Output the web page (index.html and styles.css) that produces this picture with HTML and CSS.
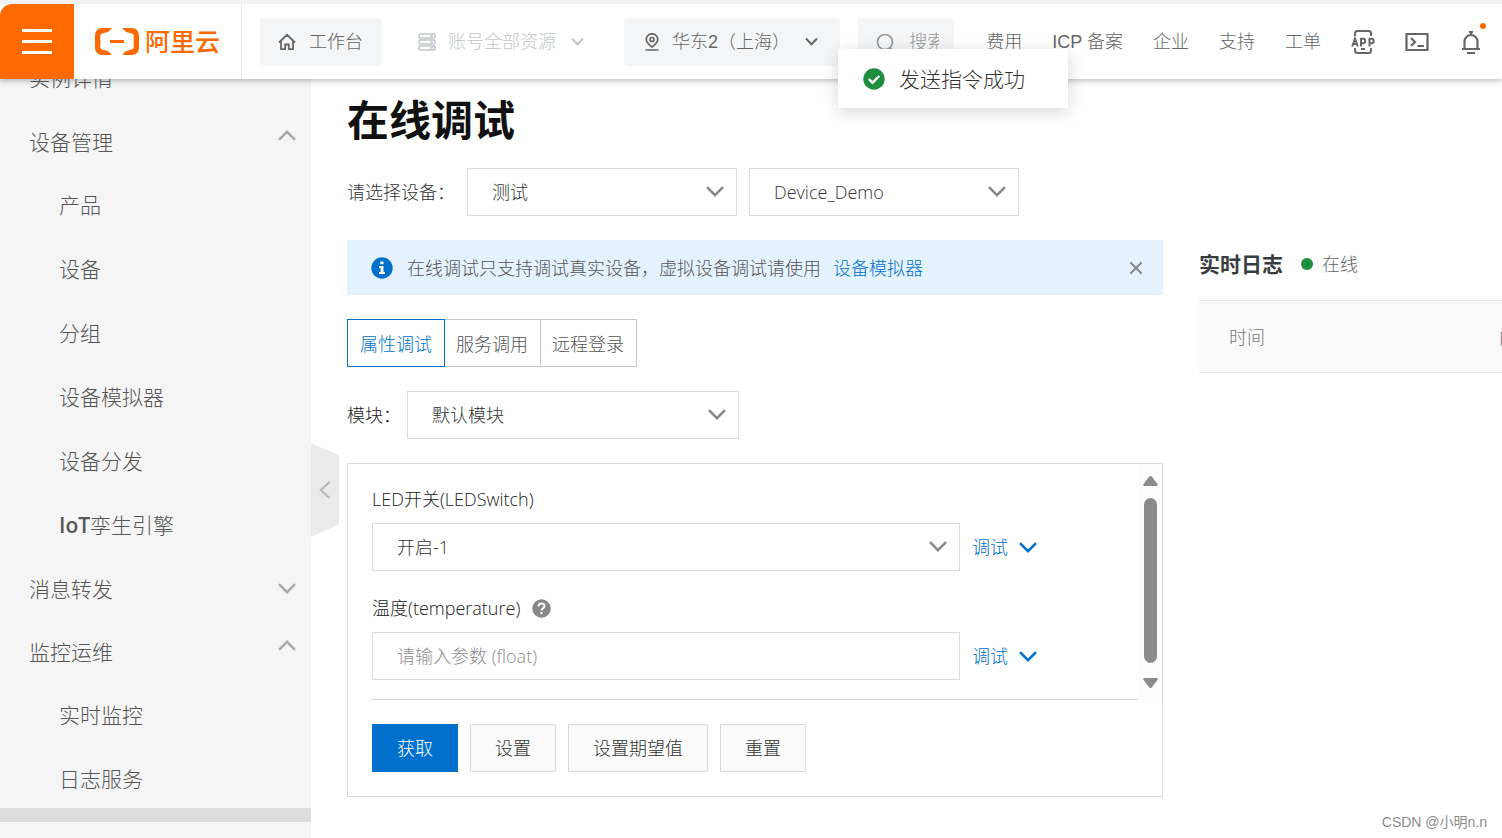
FILE: index.html
```html
<!DOCTYPE html>
<html lang="zh-CN">
<head>
<meta charset="utf-8">
<title>在线调试</title>
<link rel="stylesheet" href="styles.css">
</head>
<body>
<svg class="defs" aria-hidden="true">
  <symbol id="chevron" viewBox="0 0 18 11"><path d="M1 1.200l8 8 8-8" fill="none" stroke="currentColor" stroke-width="2.500"/></symbol>
</svg>

<header class="topbar">
  <button class="menu" aria-label="菜单"><span></span><span></span><span></span></button>
  <a class="logo" href="#">
    <svg width="44" height="27" viewBox="0 0 44 27" aria-hidden="true">
      <path d="M17 0H7a7 7 0 0 0-7 7v13a7 7 0 0 0 7 7h10l-4-4-6-1.600A2.400 2.400 0 0 1 5.300 19V8A2.400 2.400 0 0 1 7 5.600L13 4z" fill="#ff6a00"/>
      <path d="M27 0h10a7 7 0 0 1 7 7v13a7 7 0 0 1-7 7H27l4-4 6-1.600A2.400 2.400 0 0 0 38.700 19V8A2.400 2.400 0 0 0 37 5.600L31 4z" fill="#ff6a00"/>
      <path d="M15 12h14v3H15z" fill="#ff6a00"/>
    </svg>
    <span>阿里云</span>
  </a>
  <button class="chip home">
    <svg width="18" height="18" viewBox="0 0 18 18" fill="none" stroke="currentColor" stroke-width="1.800" aria-hidden="true"><path d="M1 9.500L9 1.800l8 7.700M3 8v8.200h4.200v-4.700h3.600v4.700H15V8"/></svg>
    <span>工作台</span>
  </button>
  <button class="chip account" disabled>
    <svg width="18" height="18" viewBox="0 0 18 18" fill="none" stroke="currentColor" stroke-width="1.600" aria-hidden="true"><rect x="1" y="1" width="16" height="4" rx="1"/><rect x="1" y="7" width="16" height="4" rx="1"/><rect x="1" y="13" width="16" height="4" rx="1"/><path d="M12 3h3M12 9h3M12 15h3"/></svg>
    <span>账号全部资源</span>
    <svg class="small-chevron" viewBox="0 0 13 9" fill="none" stroke="currentColor" stroke-width="2" aria-hidden="true"><path d="M1 1.500l5.500 5.700L12 1.500"/></svg>
  </button>
  <button class="chip region">
    <svg width="16" height="18" viewBox="0 0 16 18" fill="none" stroke="currentColor" stroke-width="1.700" aria-hidden="true"><path d="M8 14C4 11 2.300 9 2.300 6.500a5.700 5.700 0 0 1 11.400 0C13.700 9 12 11 8 14zM1.500 17h13"/><circle cx="8" cy="6.500" r="2"/></svg>
    <span>华东2（上海）</span>
    <svg class="small-chevron" viewBox="0 0 13 9" fill="none" stroke="currentColor" stroke-width="2" aria-hidden="true"><path d="M1 1.500l5.500 5.700L12 1.500"/></svg>
  </button>
  <div class="spacer"></div>
  <label class="search">
    <svg width="18" height="18" viewBox="0 0 18 18" fill="none" stroke="currentColor" stroke-width="1.700" aria-hidden="true"><circle cx="9" cy="9" r="7.500"/><path d="M13.500 14.500l3 3"/></svg>
    <input type="text" placeholder="搜索" aria-label="搜索">
  </label>
  <nav class="toplinks">
    <a href="#">费用</a>
    <a href="#">ICP 备案</a>
    <a href="#">企业</a>
    <a href="#">支持</a>
    <a href="#">工单</a>
    <a href="#" aria-label="APP">
      <svg width="24" height="24" viewBox="0 0 24 24" fill="none" stroke="currentColor" stroke-width="2" aria-hidden="true"><path d="M4 6V3.500Q4 1 6.500 1h11Q20 1 20 3.500V6M4 18v2.500Q4 23 6.500 23h11q2.500 0 2.500-2.500V18M10 19h4"/><path stroke-width="2" d="M1.200 16.500L4 8.500l2.800 8M2.200 14h3.600M10 16.500V8.800h2a2.200 2.200 0 0 1 0 4.400h-2M18.500 16.500V8.800h2a2.200 2.200 0 0 1 0 4.400h-2"/></svg>
    </a>
    <a href="#" aria-label="命令行">
      <svg width="24" height="24" viewBox="0 0 24 24" fill="none" stroke="currentColor" stroke-width="2.200" aria-hidden="true"><path d="M1.500 4h21v16h-21zM6 8l4 4-4 4M12.500 16H19"/></svg>
    </a>
    <a class="bell" href="#" aria-label="通知">
      <svg width="24" height="24" viewBox="0 0 24 24" fill="none" stroke="currentColor" stroke-width="2.200" aria-hidden="true"><path d="M3 19h18M5.500 19v-7.500a6.500 6.500 0 0 1 13 0V19M8 23h8M10 2h4M12 2v3"/></svg>
      <i></i>
    </a>
  </nav>
</header>

<div class="layout">
  <aside class="sidebar">
    <nav class="side-scroll">
      <ul class="side-list">
        <li><a class="side-head" href="#">实例详情</a></li>
        <li>
          <button class="side-head group">设备管理<svg class="chevron up"><use href="#chevron"/></svg></button>
          <ul class="side-sub">
            <li><a href="#">产品</a></li>
            <li><a href="#">设备</a></li>
            <li><a href="#">分组</a></li>
            <li><a href="#">设备模拟器</a></li>
            <li><a href="#">设备分发</a></li>
            <li><a href="#"><span class="latin">IoT</span>孪生引擎</a></li>
          </ul>
        </li>
        <li><button class="side-head group">消息转发<svg class="chevron"><use href="#chevron"/></svg></button></li>
        <li>
          <button class="side-head group">监控运维<svg class="chevron up"><use href="#chevron"/></svg></button>
          <ul class="side-sub">
            <li><a href="#">实时监控</a></li>
            <li><a href="#">日志服务</a></li>
          </ul>
        </li>
      </ul>
    </nav>
    <div class="side-bar"></div>
    <button class="collapse" aria-label="收起侧栏"><svg width="12" height="18" viewBox="0 0 12 18" fill="none" stroke="currentColor" stroke-width="2.400" aria-hidden="true"><path d="M10.500 1L2 9l8.500 8"/></svg></button>
  </aside>

  <main class="content">
    <section class="debug">
      <h1>在线调试</h1>

      <div class="row device-row">
        <label for="product">请选择设备：</label>
        <div class="select"><select id="product"><option>测试</option></select><svg class="chevron"><use href="#chevron"/></svg></div>
        <div class="select"><select aria-label="设备"><option>Device_Demo</option></select><svg class="chevron"><use href="#chevron"/></svg></div>
      </div>

      <div class="notice">
        <svg width="22" height="22" viewBox="0 0 22 22" aria-hidden="true"><circle cx="11" cy="11" r="10.700" fill="#0070cc"/><path d="M9.300 4.500h3.200v2.700H9.300zM8 9h4.500v6H14v2H8v-2h1.600v-4H8z" fill="#fff"/></svg>
        <p>在线调试只支持调试真实设备，虚拟设备调试请使用<a href="#">设备模拟器</a></p>
        <button aria-label="关闭"><svg width="14" height="14" viewBox="0 0 14 14" fill="none" stroke="currentColor" stroke-width="2" aria-hidden="true"><path d="M1.300 1.300l11.400 11.400M12.700 1.300L1.300 12.700"/></svg></button>
      </div>

      <div class="tabs" role="tablist">
        <button class="active" role="tab" aria-selected="true">属性调试</button>
        <button role="tab" aria-selected="false">服务调用</button>
        <button role="tab" aria-selected="false">远程登录</button>
      </div>

      <div class="row module-row">
        <label for="module">模块：</label>
        <div class="select"><select id="module"><option>默认模块</option></select><svg class="chevron"><use href="#chevron"/></svg></div>
      </div>

      <div class="panel">
        <div class="panel-scroll">
          <div class="fields">
            <div class="field">
              <label for="led">LED开关(LEDSwitch)</label>
              <div class="control">
                <div class="select"><select id="led"><option>开启-1</option></select><svg class="chevron"><use href="#chevron"/></svg></div>
                <button class="try">调试<svg class="chevron"><use href="#chevron"/></svg></button>
              </div>
            </div>
            <div class="field">
              <label for="temp">温度(temperature)
                <svg width="19" height="19" viewBox="0 0 19 19" aria-hidden="true"><circle cx="9.500" cy="9.500" r="9.300" fill="#888"/><path d="M6.500 7.500c0-4 6-3.800 6-.5 0 2.200-3 2.200-3 4.500M9.500 13v2.200" fill="none" stroke="#fff" stroke-width="2"/></svg>
              </label>
              <div class="control">
                <input id="temp" type="text" placeholder="请输入参数 (float)">
                <button class="try">调试<svg class="chevron"><use href="#chevron"/></svg></button>
              </div>
            </div>
          </div>
          <div class="scrollbar" aria-hidden="true">
            <svg width="15" height="10" viewBox="0 0 15 10"><path d="M6 .800Q7.500-.600 9 .800L14.700 8.500Q15 10 13.500 10h-12Q0 10 .300 8.500z" fill="#8b8b8b"/></svg>
            <span></span>
            <svg width="15" height="10" viewBox="0 0 15 10"><path d="M6 9.200q1.500 1.400 3 0l5.700-7.700Q15 0 13.500 0h-12Q0 0 .300 1.500z" fill="#8b8b8b"/></svg>
          </div>
        </div>
        <div class="actions">
          <button class="primary">获取</button>
          <button>设置</button>
          <button>设置期望值</button>
          <button>重置</button>
        </div>
      </div>
    </section>

    <section class="log">
      <div class="log-head"><h2>实时日志</h2><i></i><span>在线</span></div>
      <table>
        <thead><tr><th class="time">时间</th><th>内容</th></tr></thead>
      </table>
    </section>
  </main>
</div>

<div class="toast" role="status">
  <svg width="22" height="22" viewBox="0 0 22 22" aria-hidden="true"><circle cx="11" cy="11" r="10.700" fill="#1e8e3e"/><path d="M5.800 11l3.700 3.700 6.800-6.700" fill="none" stroke="#fff" stroke-width="2.400"/></svg>
  <span>发送指令成功</span>
</div>
<div class="watermark">CSDN @小明n.n</div>
</body>
</html>
```

FILE: styles.css
```css
* { box-sizing: border-box; }

body {
  margin: 0;
  height: 100vh;
  overflow: hidden;
  display: flex;
  flex-direction: column;
  background: #fff;
  color: #333;
  font: 300 18px/24px "Open Sans", "Noto Sans CJK SC", sans-serif;
}

button, input, select { font: inherit; color: inherit; margin: 0; }
button { background: none; border: 0; padding: 0; cursor: pointer; }
a { color: inherit; text-decoration: none; }
ul { list-style: none; margin: 0; padding: 0; }
svg { display: block; flex: none; }
.defs { position: absolute; width: 0; height: 0; }
.chevron { width: 18px; height: 11px; color: #888; }

/* top bar */
.topbar {
  flex: none;
  display: flex;
  align-items: center;
  height: 79px;
  border-top: 4px solid #f2f2f2;
  background: #fff;
  box-shadow: 0 2px 6px rgba(0, 0, 0, .25);
  position: relative;
  z-index: 2;
  color: #666;
  font-family: "Liberation Sans", "Noto Sans CJK SC", sans-serif;
  white-space: nowrap;
}
.menu {
  align-self: stretch;
  width: 74px;
  background: #ff6a00;
  border-top-left-radius: 12px;
  display: flex;
  flex-direction: column;
  align-items: center;
  justify-content: center;
  gap: 8px;
}
.menu span { width: 30px; height: 3px; background: #fff; }
.logo {
  align-self: stretch;
  display: flex;
  align-items: center;
  gap: 6px;
  padding: 0 21px 0 21px;
  border-right: 1px solid #e8e8e8;
  color: #ff6a00;
  font-size: 25px;
  font-weight: 500;
}
.chip {
  height: 48px;
  display: flex;
  align-items: center;
  border-radius: 4px;
  background: #f4f5f7;
}
.home { margin-left: 18px; padding: 0 19px 0 18px; gap: 13px; }
.account { padding: 0 0 0 36px; gap: 12px; background: none; color: #c1c6cc; }
.small-chevron { width: 13px; height: 9px; }
.account .small-chevron { margin-left: 3px; }
.region { margin-left: 40px; width: 216px; padding: 0 22px 0 20px; gap: 12px; }
.region .small-chevron { margin-left: auto; }
.spacer { flex: 1; }
.search {
  height: 48px;
  width: 96px;
  padding: 0 15px 0 18px;
  display: flex;
  align-items: center;
  gap: 15px;
  background: #f4f5f7;
  color: #999;
}
.search input { flex: 1; min-width: 0; border: 0; padding: 0; background: none; outline: 0; }
.search input::placeholder { color: #999; opacity: 1; }
.toplinks { display: flex; align-items: center; gap: 30px; padding: 0 19px 0 32px; }
.bell { position: relative; }
.bell i {
  position: absolute;
  right: -3px;
  top: -7px;
  width: 6px;
  height: 6px;
  border-radius: 50%;
  background: #ff6a00;
}

/* side navigation */
.layout { flex: 1; min-height: 0; display: flex; }
.sidebar {
  position: relative;
  flex: none;
  width: 311px;
  padding-bottom: 16px;
  display: flex;
  flex-direction: column;
  background: #f5f5f5;
  color: #555;
  font-size: 21px;
}
.side-scroll { flex: 1; min-height: 0; overflow: hidden; }
.side-list { margin-top: -33px; }
.side-head, .side-sub a {
  display: flex;
  align-items: center;
  width: 100%;
  height: 64px;
  padding: 0 15px 0 29px;
}
.side-head.group { height: 63px; justify-content: space-between; }
.side-sub a { padding-left: 59px; }
.side-head .chevron { color: #aaa; }
.side-head .up { transform: rotate(180deg); margin-bottom: 12px; }
.latin { font-weight: 600; }
.side-bar { flex: none; height: 14px; background: #ddd; }
.collapse {
  position: absolute;
  left: 100%;
  top: 364px;
  width: 28px;
  height: 94px;
  padding-left: 8px;
  background: #eaeaea;
  color: #bbb;
  clip-path: polygon(0 0, 100% 13%, 100% 87%, 0 100%);
}

/* content */
.content { flex: 1; min-width: 0; display: flex; gap: 36px; padding: 17px 0 0 36px; }
.debug { flex: 1; min-width: 0; display: flex; flex-direction: column; gap: 24px; }
h1 { margin: 0; font-size: 42px; line-height: 48px; font-weight: 700; color: #111; }
.row { display: flex; align-items: center; }
.device-row { gap: 12px; }
.device-row .select { width: 270px; }
.module-row { gap: 6px; color: #222; }
.module-row .select { width: 332px; }
.select { position: relative; }
.select select, .control input {
  display: block;
  width: 100%;
  height: 48px;
  padding: 0 40px 0 24px;
  border: 1px solid #dcdcdc;
  border-radius: 0;
  background: #fff;
  color: #333;
  appearance: none;
  outline: 0;
}
.select .chevron { position: absolute; right: 13px; top: 18px; pointer-events: none; }

.notice {
  display: flex;
  align-items: center;
  gap: 14px;
  height: 55px;
  padding: 0 20px 0 24px;
  background: #e4f2fe;
  color: #555;
}
.notice p { margin: 0; flex: 1; }
.notice a { margin-left: 12px; color: #0070cc; }
.notice button { color: #888; }

.tabs { display: flex; }
.tabs button {
  height: 48px;
  padding: 2px 12px 0 11px;
  margin-left: -1px;
  border: 1px solid #c8c8c8;
  color: #555;
}
.tabs .active {
  position: relative;
  margin-left: 0;
  padding-left: 12px;
  border-color: #0070cc;
  color: #0070cc;
}

.panel { border: 1px solid #dcdcdc; }
.panel-scroll { display: flex; }
.fields {
  flex: 1;
  min-width: 0;
  margin-left: 24px;
  padding: 23px 0 19px;
  display: flex;
  flex-direction: column;
  gap: 25px;
  border-bottom: 1px solid #d4d4d4;
  color: #222;
}
.field { display: flex; flex-direction: column; gap: 12px; }
.field label { display: flex; align-items: center; gap: 12px; }
.control { display: flex; gap: 12px; }
.control .select, .control input { flex: 1; min-width: 0; }
.control input::placeholder { color: #8c8c8c; opacity: 1; }
.try { flex: none; width: 166px; display: flex; align-items: center; gap: 11px; color: #0070cc; }
.try .chevron { color: #0070cc; }
.scrollbar {
  flex: none;
  width: 24px;
  padding: 12px 0;
  display: flex;
  flex-direction: column;
  align-items: center;
  gap: 12px;
  background: #fcfcfc;
}
.scrollbar span { flex: 1; width: 13px; margin-bottom: 3px; border-radius: 7px; background: #8b8b8b; }
.actions { display: flex; gap: 12px; padding: 24px; }
.actions button {
  height: 48px;
  padding: 0 24px;
  border: 1px solid #dcdcdc;
  background: #fafafa;
  color: #333;
}
.actions .primary { background: #0070cc; border-color: #0070cc; color: #fff; }

/* log */
.log { flex: none; width: 303px; padding-top: 150px; overflow: hidden; color: #666; }
.log-head { display: flex; align-items: center; height: 36px; margin-bottom: 18px; }
h2 { margin: 0 18px 0 0; font-size: 21px; font-weight: 700; color: #373d41; }
.log-head i { width: 12px; height: 12px; margin-right: 9px; border-radius: 50%; background: #1e8e3e; }
.log table { width: 480px; border-collapse: collapse; table-layout: fixed; background: #fafafa; color: #777; }
.log th {
  height: 72px;
  padding: 0 0 0 30px;
  border: solid #e8e8e8;
  border-width: 1px 0;
  text-align: left;
  font-weight: inherit;
}
.log .time { width: 270px; }

/* overlays */
.toast {
  position: absolute;
  z-index: 3;
  left: 838px;
  top: 49px;
  display: flex;
  align-items: center;
  gap: 14px;
  height: 59px;
  padding: 0 43px 0 25px;
  background: #fff;
  box-shadow: 0 4px 16px rgba(0, 0, 0, .16);
  font-size: 21px;
}
.watermark {
  position: absolute;
  right: 15px;
  bottom: 4px;
  color: #8c8c8c;
  font: 14px/24px "Liberation Sans", "Noto Sans CJK SC", sans-serif;
}
```
